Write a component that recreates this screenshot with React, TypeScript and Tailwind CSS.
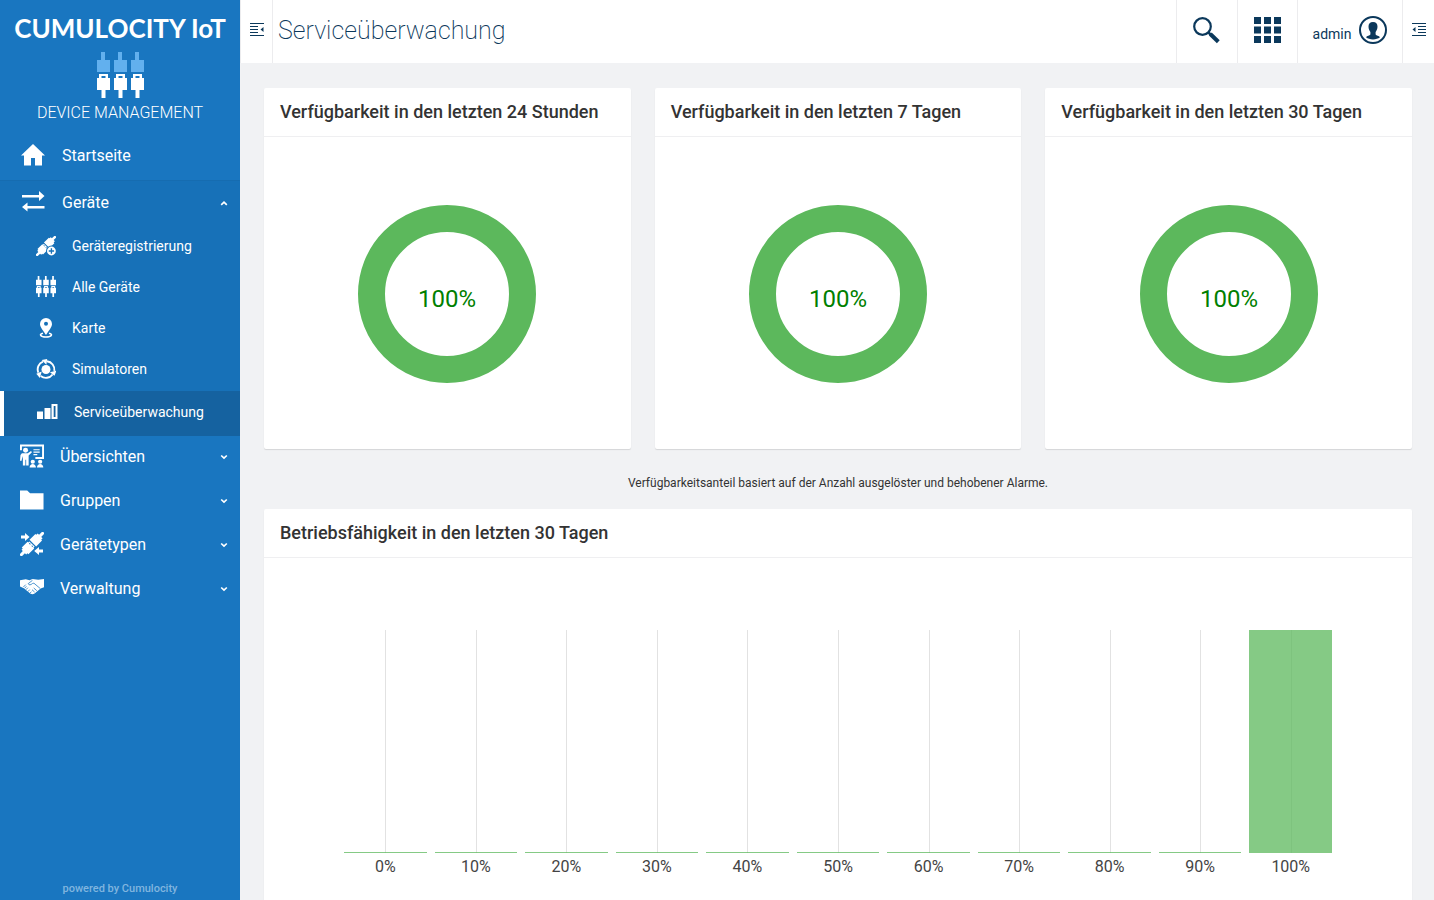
import type { ReactNode } from "react";

function PlugUp({ x, y }: { x: number; y: number }) {
  return <path d={`M${x + 4} ${y}h4v8h5v12h-13v-12h4z`} />;
}

function PlugDown({ x, y }: { x: number; y: number }) {
  return (
    <path
      fillRule="evenodd"
      d={`M${x + 2} ${y}h9v4h2v12h-4.500v8h-4v-8h-4.500v-12h2zM${x + 4.5} ${y + 2}v2h4v-2z`}
    />
  );
}

function LogoPlugs() {
  return (
    <svg width="47" height="46" viewBox="0 0 47 46" fill="#fff" aria-hidden="true">
      <g fill="#62b0ee">
        <PlugUp x={0} y={0} />
        <PlugUp x={17} y={0} />
        <PlugUp x={34} y={0} />
      </g>
      <PlugDown x={0} y={22} />
      <PlugDown x={17} y={22} />
      <PlugDown x={34} y={22} />
    </svg>
  );
}

function HomeIcon() {
  return (
    <svg width="24" height="24" viewBox="0 0 24 24" fill="#fff" aria-hidden="true">
      <path d="M12 0L24 11.500H21V21.500H14V14H10V21.500H3V11.500H0Z" />
    </svg>
  );
}

function ArrowsIcon() {
  return (
    <svg width="24" height="24" viewBox="0 0 24 24" fill="#fff" aria-hidden="true">
      <path d="M1 4h17V0l5.500 5L18 10V6.500H1z" />
      <path d="M23.500 15H6.500v-3.500L1 16l5.500 4.500v-3h17z" />
    </svg>
  );
}

/* A plug and its socket meeting on the diagonal; drawn in a 24 unit box. */
function DiagonalPlug() {
  return (
    <g transform="rotate(45 12 12)">
      <path d="M10.500 -4.500h3v5h2v2h1.200v8.300H7.300V2.500h1.200v-2h2z" />
      <path d="M8.300 12h7.400v1.600h1v8.200h-1.400v1.700h-1.800v5h-3v-5H8.700v-1.700H7.300v-8.200h1zM9.500 12.900v.9h1.600v-.9zM12.900 12.900v.9h1.600v-.9z" fillRule="evenodd" />
    </g>
  );
}

function RegisterIcon() {
  return (
    <svg width="20" height="20" viewBox="0 0 24 24" fill="#fff" aria-hidden="true">
      <DiagonalPlug />
      <circle cx="18.500" cy="18" r="6.500" fill="#1771b8" />
      <circle cx="18.500" cy="18" r="5.300" />
      <path d="M18.500 14.800v6.400M15.300 18h6.400" stroke="#1771b8" strokeWidth="1.600" />
    </svg>
  );
}

function DeviceTypesIcon() {
  return (
    <svg width="24" height="24" viewBox="0 0 24 24" fill="#fff" aria-hidden="true">
      <DiagonalPlug />
      <path d="M1 3.500h4V1l4.500 4L5 9V6.500H1z" />
      <path d="M23 17.500h-4V15l-4.800 4 4.800 4v-2.500h4z" />
    </svg>
  );
}

function DevicesIcon() {
  return (
    <svg width="20" height="21" viewBox="0 0 47 46" preserveAspectRatio="none" fill="#fff" aria-hidden="true">
      <PlugUp x={0} y={0} />
      <PlugUp x={17} y={0} />
      <PlugUp x={34} y={0} />
      <PlugDown x={0} y={22} />
      <PlugDown x={17} y={22} />
      <PlugDown x={34} y={22} />
    </svg>
  );
}

function MapIcon() {
  return (
    <svg width="20" height="20" viewBox="0 0 20 20" fill="#fff" aria-hidden="true">
      <path
        fillRule="evenodd"
        d="M10 0a6 6 0 0 1 6 6c0 3.500-3.500 6.500-6 11C7.500 12.500 4 9.500 4 6a6 6 0 0 1 6-6zm0 3.800a2 2 0 1 0 0 4 2 2 0 0 0 0-4z"
      />
      <path d="M7 15.300c-4.500 1-2.500 3.700 3 3.700s7.500-2.700 3-3.700" fill="none" stroke="#fff" strokeWidth="1.600" />
    </svg>
  );
}

function SimulatorArc({ angle }: { angle: number }) {
  return (
    <g transform={`rotate(${angle} 10 10.500)`}>
      <path d="M11 2.300a8.300 8.300 0 0 1 7.300 9.500" fill="none" stroke="#fff" strokeWidth="1.900" />
      <path d="M20.500 11.500l-2 5.300-4.600-3.600z" />
    </g>
  );
}

function SimulatorIcon() {
  return (
    <svg width="20" height="20" viewBox="0 0 20 20" fill="#fff" aria-hidden="true">
      <circle cx="10" cy="10.500" r="4.500" />
      <SimulatorArc angle={0} />
      <SimulatorArc angle={120} />
      <SimulatorArc angle={240} />
    </svg>
  );
}

function BarsIcon() {
  return (
    <svg width="21" height="20" viewBox="0 0 21 20" fill="#fff" aria-hidden="true">
      <path d="M0 9.500h6V17H0zM7.500 6h6v11h-6zM14.500 2h6v15h-6zM16.700 4v11h1.800V4z" fillRule="evenodd" />
    </svg>
  );
}

function BoardIcon() {
  return (
    <svg width="25" height="24" viewBox="0 0 25 24" fill="#fff" aria-hidden="true">
      <path d="M0 0h25v15h-9v-2h7V2H2v4H0z" />
      <circle cx="5.800" cy="6" r="2.600" />
      <path d="M2 9.200h6l3.500-2.500.9 1.500L9 11.500V22H6.400v-6H5.600v6H3v-7L2.500 12l-.8 5H0l.5-6z" />
      <path d="M14 5.500h6.500M14 8h6.500M14 10.500h4" stroke="#fff" strokeWidth="1.200" />
      <circle cx="13.300" cy="18" r="2.200" />
      <circle cx="21" cy="18" r="2.200" />
      <path d="M10 24c0-5 6.600-5 6.600 0zM17.700 24c0-5 6.600-5 6.600 0z" />
    </svg>
  );
}

function FolderIcon() {
  return (
    <svg width="25" height="24" viewBox="0 0 25 24" fill="#fff" aria-hidden="true">
      <path d="M0 2h7.500l3 3h14V22H0z" />
    </svg>
  );
}

function HandshakeIcon() {
  return (
    <svg width="25" height="24" viewBox="0 0 25 24" fill="#fff" aria-hidden="true">
      <path d="M0 4l6-1 4 1 3-1.500 6 1 6-.8v8.500l-3.500 1.300-6.300 5.200c-1.500 1-3 1-4.500 0L4 12.200 0 10.500z" />
      <path
        d="M3.500 11L6 8.500M13 4l-4.500 3.500c.8 1.800 2.700 1.500 4.500-.2l1.500-.3 6.500 5.500M14.300 12l3.200 2.800M12.500 13.800l2.700 2.400M6.200 13.800l2-2.100M8.300 15.700l1.800-2M10.600 17.200l1.300-1.400M4.800 12.300l1.900-2"
        fill="none"
        stroke="#1976c0"
        strokeWidth=".8"
      />
    </svg>
  );
}

function Chevron({ up = false }: { up?: boolean }) {
  return (
    <svg className="ml-auto" width="8" height="6" viewBox="0 0 8 6" fill="none" stroke="#fff" strokeWidth="1.700" aria-hidden="true">
      <path d={up ? "M1.200 4.800L4 2.200l2.800 2.600" : "M1.200 1.500L4 4.100l2.800-2.600"} />
    </svg>
  );
}

function OutlineIcon({ flip = false }: { flip?: boolean }) {
  return (
    <svg width="14" height="14" viewBox="0 0 14 14" stroke="#0b385b" strokeWidth="1" fill="none" aria-hidden="true">
      {flip ? (
        <>
          <path d="M0 .5h14M6 3.500h8M6 6.500h8M6 9.500h8M0 12.500h14" />
          <path d="M3.500 4v5L.5 6.500z" fill="#0b385b" stroke="none" />
        </>
      ) : (
        <>
          <path d="M0 .5h14M0 3.500h8M0 6.500h8M0 9.500h8M0 12.500h14" />
          <path d="M13.500 4v5l-3-2.500z" fill="#0b385b" stroke="none" />
        </>
      )}
    </svg>
  );
}

function SearchIcon() {
  return (
    <svg width="28" height="28" viewBox="0 0 28 28" fill="none" stroke="#0b385b" aria-hidden="true">
      <circle cx="9.500" cy="9.500" r="8.300" strokeWidth="2.200" />
      <path d="M15.500 15.500l2.500 2.500" strokeWidth="2.500" />
      <path d="M17.300 17l8 7.800" strokeWidth="4" />
    </svg>
  );
}

function GridIcon() {
  return (
    <svg width="27" height="26" viewBox="0 0 27 26" fill="#0b385b" aria-hidden="true">
      <path d="M0 0h7v7H0zM10 0h7v7h-7zM20 0h7v7h-7zM0 9.500h7v7H0zM10 9.500h7v7h-7zM20 9.500h7v7h-7zM0 19h7v7H0zM10 19h7v7h-7zM20 19h7v7h-7z" />
    </svg>
  );
}

function UserIcon() {
  return (
    <svg width="28" height="28" viewBox="0 0 28 28" fill="#0b385b" aria-hidden="true">
      <circle cx="14" cy="14" r="13" fill="none" stroke="#0b385b" strokeWidth="2" />
      <path d="M14 6c3 0 4.600 2 4.500 4.800-.1 2.400-1 3.900-1.900 5.100v2.600c.7 1.200 3.400 1.100 4.400 2.700-1.800 1.400-4.200 2.200-7 2.200s-5.200-.8-7-2.200c1-1.600 3.700-1.500 4.400-2.700v-2.600c-.9-1.200-1.800-2.700-1.900-5.100C9.400 8 11 6 14 6z" />
    </svg>
  );
}

function TopItem({ icon, label }: { icon: ReactNode; label: string }) {
  return (
    <a href="#" className="flex h-11 items-center gap-4 pr-3 pb-[3px] pl-5 text-base">
      <span className="flex w-6 pb-0.5">{icon}</span>
      <span>{label}</span>
      <Chevron />
    </a>
  );
}

function SubItem({ icon, label }: { icon: ReactNode; label: string }) {
  return (
    <a href="#" className="flex h-[41px] items-center gap-4 pl-9 text-sm">
      {icon}
      <span>{label}</span>
    </a>
  );
}

function Sidebar() {
  return (
    <aside className="flex w-60 shrink-0 flex-col bg-[#1976c0] text-white">
      <div className="flex h-[130px] flex-col items-center pt-3">
        <div className="font-[Lato] text-[26px] leading-8 font-bold whitespace-nowrap">CUMULOCITY IoT</div>
        <div className="mt-2">
          <LogoPlugs />
        </div>
        <div className="pt-[3px] text-base leading-6 font-light">DEVICE MANAGEMENT</div>
      </div>
      <nav className="flex flex-col">
        <a href="#" className="flex h-[50px] items-center gap-[17px] pt-px pl-[21px] text-base">
          <HomeIcon />
          <span>Startseite</span>
        </a>
        <div className="border-t border-[#166cb0] bg-[#1771b8]">
          <a href="#" aria-expanded="true" className="flex h-11 items-center gap-[17px] pr-3 pl-[21px] text-base">
            <ArrowsIcon />
            <span>Geräte</span>
            <Chevron up />
          </a>
          <SubItem icon={<RegisterIcon />} label="Geräteregistrierung" />
          <SubItem icon={<DevicesIcon />} label="Alle Geräte" />
          <SubItem icon={<MapIcon />} label="Karte" />
          <SubItem icon={<SimulatorIcon />} label="Simulatoren" />
          <a
            href="#"
            aria-current="page"
            className="mt-0.5 flex h-[45px] items-center gap-4 border-l-4 border-white bg-[#1562a0] pb-[3px] pl-[33px] text-sm"
          >
            <BarsIcon />
            <span>Serviceüberwachung</span>
          </a>
        </div>
        <TopItem icon={<BoardIcon />} label="Übersichten" />
        <TopItem icon={<FolderIcon />} label="Gruppen" />
        <TopItem icon={<DeviceTypesIcon />} label="Gerätetypen" />
        <TopItem icon={<HandshakeIcon />} label="Verwaltung" />
      </nav>
      <footer className="mt-auto pb-1 text-center text-[11px] leading-5 font-medium text-[#80b5df]">powered by Cumulocity</footer>
    </aside>
  );
}

function Header() {
  return (
    <header className="flex h-[63px] shrink-0 bg-white text-[#0b385b]">
      <button aria-label="Navigation umschalten" className="flex w-[33px] items-center justify-center border-x border-[#ececee] pb-1">
        <OutlineIcon />
      </button>
      <h1 className="flex-1 pt-3 pl-[5px] text-[25px] leading-[38px] font-extralight">Serviceüberwachung</h1>
      <button aria-label="Suche" className="flex w-[61px] items-center justify-center border-l border-[#ececee] pb-0.5">
        <SearchIcon />
      </button>
      <button aria-label="Anwendungen" className="flex w-[60px] items-center justify-center border-l border-[#ececee] pb-[3px]">
        <GridIcon />
      </button>
      <button className="flex w-[105px] items-center justify-center gap-2 border-l border-[#ececee] pb-[3px] text-sm">
        <span className="pt-2">admin</span>
        <UserIcon />
      </button>
      <button aria-label="Seitenleiste umschalten" className="flex w-8 items-center justify-center border-l border-[#ececee] pb-1">
        <OutlineIcon flip />
      </button>
    </header>
  );
}

function Card({ title, className = "", children }: { title: string; className?: string; children: ReactNode }) {
  return (
    <section className={`rounded-xs bg-white shadow-[0_1px_1px_rgba(0,0,0,0.12)] ${className}`}>
      <h2 className="border-b border-[#efeff1] px-4 py-3 text-lg leading-6 font-medium text-[#333]">{title}</h2>
      {children}
    </section>
  );
}

function Donut({ value }: { value: number }) {
  return (
    <div className="flex h-[312px] items-center justify-center pt-px">
      <svg width="178" height="178" viewBox="0 0 178 178" role="img" aria-label={`${value}%`}>
        <circle cx="89" cy="89" r="75.500" fill="none" stroke="#5cb85c" strokeWidth="27" />
        <text x="89" y="102" textAnchor="middle" fontSize="24" fill="#008000">
          {value}%
        </text>
      </svg>
    </div>
  );
}

const availability = [
  { title: "Verfügbarkeit in den letzten 24 Stunden", value: 100 },
  { title: "Verfügbarkeit in den letzten 7 Tagen", value: 100 },
  { title: "Verfügbarkeit in den letzten 30 Tagen", value: 100 },
];

const buckets = [0, 10, 20, 30, 40, 50, 60, 70, 80, 90, 100].map((percent) => ({
  percent,
  share: percent === 100 ? 100 : 0,
}));

function Histogram() {
  return (
    <div className="grid grid-cols-11 px-[76px] pt-[72px] pb-6">
      {buckets.map(({ percent, share }) => (
        <div key={percent} className="flex flex-col items-center">
          <div className="relative flex h-[223px] w-full items-end justify-center px-1">
            <div className="absolute inset-y-0 left-1/2 w-px bg-[#e2e2e2]" />
            <div className="relative min-h-px w-full bg-[#5cb85c]/75" style={{ height: `${share}%` }} />
          </div>
          <span className="pt-0.5 text-base leading-6 text-[#444]">{percent}%</span>
        </div>
      ))}
    </div>
  );
}

export default function App() {
  return (
    <div className="flex min-h-screen bg-[#f1f2f4] font-[Roboto,sans-serif]">
      <Sidebar />
      <div className="flex min-w-0 flex-1 flex-col">
        <Header />
        <main className="flex flex-1 flex-col pt-[25px] pr-[22px] pl-6">
          <div className="grid grid-cols-3 gap-6">
            {availability.map(({ title, value }) => (
              <Card key={title} title={title}>
                <Donut value={value} />
              </Card>
            ))}
          </div>
          <p className="pt-6 pb-4 text-center text-xs leading-5 text-[#333]">
            Verfügbarkeitsanteil basiert auf der Anzahl ausgelöster und behobener Alarme.
          </p>
          <Card title="Betriebsfähigkeit in den letzten 30 Tagen" className="flex-1">
            <Histogram />
          </Card>
        </main>
      </div>
    </div>
  );
}
